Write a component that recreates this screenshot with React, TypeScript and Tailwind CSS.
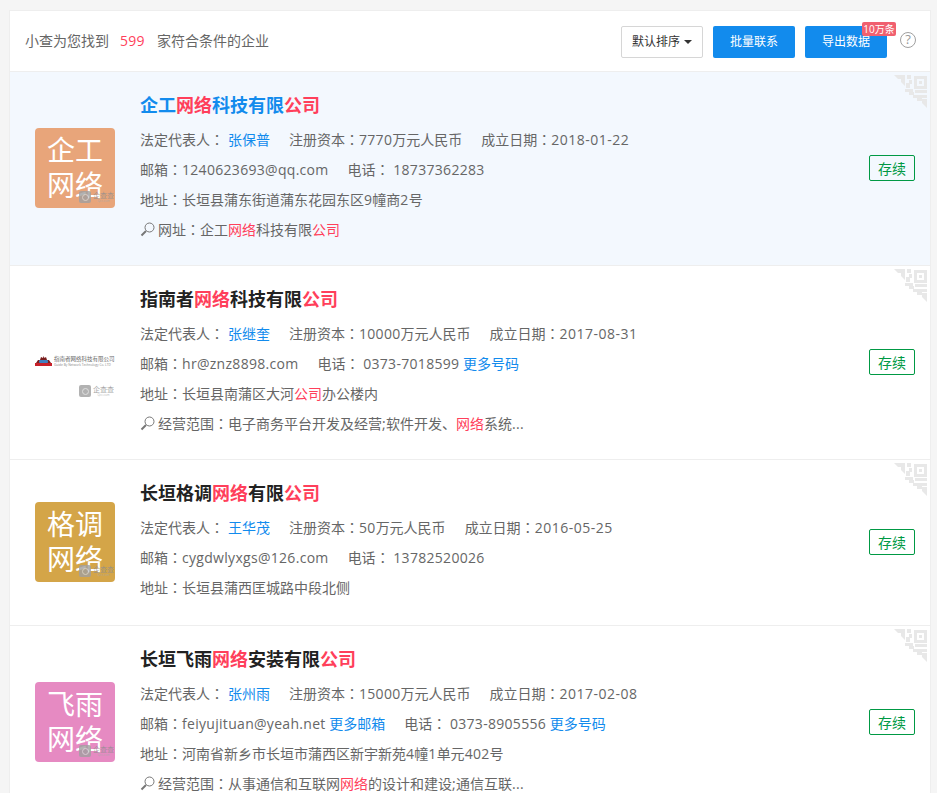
import React from "react";

type Seg = string | { hl: string } | { link: string };

// latin runs are a bit wider in the original, and its colon sits centred
function Run({ text }: { text: string }) {
  const parts = text.split(/(：|[\x21-\x7e]+)/).filter(Boolean);
  return (
    <>
      {parts.map((p, i) => {
        if (p === "：") return <span key={i} className="[font-family:'Noto_Sans_CJK_TC',sans-serif]">：</span>;
        if (/^[\x21-\x7e]+$/.test(p)) return <span key={i} className="tracking-[0.3px]">{p}</span>;
        return <span key={i}>{p}</span>;
      })}
    </>
  );
}

function Text({ segs }: { segs: Seg[] }) {
  return (
    <>
      {segs.map((s, i) => {
        if (typeof s === "string") return <Run key={i} text={s} />;
        if ("hl" in s) return <span key={i} className="text-[#ff3f5b]">{s.hl}</span>;
        return <span key={i} className="text-[#128bed]">{s.link}</span>;
      })}
    </>
  );
}

function QrCorner() {
  const cells = [
    [13, 0, 4, 4], [15, 5, 3, 4], [12, 8, 4, 5],
    [25, 6, 3, 3],
    [11, 14, 8, 3], [15, 17, 5, 3], [21, 15, 12, 3], [19, 20, 6, 3], [25, 20, 8, 3], [23, 23, 5, 3],
  ];
  return (
    <svg width="33" height="33" viewBox="0 0 33 33" className="absolute right-[3px] top-[3px]">
      <path d="M0 0H11V11L7 7V4H4Z" fill="#e8e8e8" />
      <path d="M20 1H33V14H20ZM23 4V11H30V4Z" fill="#e8e8e8" fillRule="evenodd" />
      <path d="M28 24H33V33L28 28Z" fill="#e8e8e8" />
      {cells.map((c, i) => (
        <rect key={i} x={c[0]} y={c[1]} width={c[2]} height={c[3]} fill="#e8e8e8" />
      ))}
    </svg>
  );
}

function Watermark() {
  return (
    <div className="absolute left-[44px] top-[63px] flex items-center gap-[2px] opacity-80">
      <div className="flex h-[12px] w-[12px] items-center justify-center rounded-[2px] bg-[#a0a0a0]">
        <div className="h-[7px] w-[7px] rounded-full border border-[#d8d8d8]" />
      </div>
      <div className="flex flex-col items-center leading-none">
        <span className="text-[7px] leading-[8px] text-[#8f8f8f]">企查查</span>
        <span className="text-[3px] leading-[3px] text-[#aaaaaa]">Qcc.com</span>
      </div>
    </div>
  );
}

function LetterLogo({ top, bottom, color }: { top: string; bottom: string; color: string }) {
  return (
    <div className={`relative mb-px flex h-20 w-20 shrink-0 flex-col items-center justify-center rounded-[4px] text-[28px] leading-[35px] text-white ${color}`}>
      <span>{top}</span>
      <span>{bottom}</span>
      <Watermark />
    </div>
  );
}

function ImageLogo() {
  return (
    <div className="relative mb-px h-20 w-20 shrink-0">
      <div className="absolute left-0 top-[33px] flex items-center gap-[2px]">
        <svg width="17" height="13" viewBox="0 0 17 13">
          <path d="M1 8 L3 5 L5 5 L6 2 L8 3 L8.5 1 L9.5 3 L11 2 L12 5 L14 5 L16 8 Z" fill="#7a1f1f" />
          <rect x="4" y="5" width="9" height="3" rx="1" fill="#3f7fc0" />
          <rect x="0" y="8" width="17" height="3" fill="#c8202a" />
        </svg>
        <div className="flex flex-col leading-none">
          <span className="whitespace-nowrap text-[5.5px] leading-[7px] text-[#666666]">指南者网络科技有限公司</span>
          <span className="whitespace-nowrap text-[3.2px] leading-[4px] text-[#888888]">Guide By Network Technology Co. LTD</span>
        </div>
      </div>
      <Watermark />
    </div>
  );
}

function Row({
  logo, title, rep, capital, date, mail, phone, extra, last, active, line3Pad,
}: {
  logo: React.ReactNode;
  title: Seg[];
  rep: string;
  capital: string;
  date: string;
  mail: Seg[];
  phone: Seg[];
  extra: Seg[];
  last?: Seg[];
  active?: boolean;
  line3Pad?: boolean;
}) {
  return (
    <div className={`relative flex items-center border-b border-[#eeeeee] pl-[25px] pr-[15px] ${active ? "bg-[#f3f8fe]" : "bg-white"}`}>
      <QrCorner />
      {logo}
      <div className={`ml-[25px] min-w-0 flex-1 pt-5 ${line3Pad ? "pb-[23px]" : "pb-[21px]"}`}>
        <div className={`mb-[6px] h-[26px] text-[18px] font-bold leading-[26px] ${active ? "text-[#128bed]" : "text-[#222222]"}`}>
          <Text segs={title} />
        </div>
        <div className="flex h-[30px] items-center whitespace-nowrap">
          <span><Run text="法定代表人：" /></span>
          <span className="ml-1 text-[#128bed]">{rep}</span>
          <span className="ml-[19px]"><Run text={`注册资本：${capital}`} /></span>
          <span className="ml-[19px]"><Run text="成立日期：" /><span className="tracking-[0.5px]">{date}</span></span>
        </div>
        <div className="flex h-[30px] items-center gap-[19px] whitespace-nowrap">
          <span><Text segs={mail} /></span>
          <span><Text segs={phone} /></span>
        </div>
        <div className="flex h-[30px] items-center whitespace-nowrap"><span><Text segs={extra} /></span></div>
        {last && (
          <div className="flex h-[30px] items-center whitespace-nowrap">
            <svg width="15" height="15" viewBox="0 0 15 15" fill="none" stroke="#777777" className="mr-[3px]">
              <circle cx="9.5" cy="5.5" r="4.5" strokeWidth="1" />
              <path d="M6 9 L1.5 13.5" strokeWidth="2" />
            </svg>
            <span><Text segs={last} /></span>
          </div>
        )}
      </div>
      <div className="mb-px flex h-[26px] w-[46px] shrink-0 items-center justify-center rounded-[2px] border border-[#009944] text-[#009944]">存续</div>
    </div>
  );
}

export default function App() {
  return (
    <div className="h-[793px] overflow-hidden bg-[#f5f5f5] pl-[9px] pr-[6px] pt-[10px] text-[14px] text-[#666666] [font-family:'Open_Sans','Noto_Sans_CJK_SC',sans-serif]">
      <div className="border border-[#eeeeee] bg-white">
        <div className="flex h-[61px] items-center border-b border-[#eeeeee] pl-[15px] pr-[14px] pt-px">
          <div className="-mt-[3px] flex-1 text-[14px]">
            小查为您找到<span className="ml-[11px] mr-3 tracking-[0.3px] text-[#ff3f5b]">599</span>家符合条件的企业
          </div>
          <div className="flex h-8 w-[82px] items-center justify-center gap-1 rounded-[2px] border border-[#d6d6d6] text-[12px] text-[#333333]">
            默认排序
            <span className="h-0 w-0 border-x-[4px] border-t-[4px] border-x-transparent border-t-[#333333]" />
          </div>
          <button className="ml-[10px] h-8 w-[82px] rounded-[2px] bg-[#128bed] text-[12px] text-white">批量联系</button>
          <div className="relative ml-[10px]">
            <button className="h-8 w-[82px] rounded-[2px] bg-[#128bed] text-[12px] text-white">导出数据</button>
            <span className="absolute left-[57px] top-[-4px] flex h-[14px] w-[34px] items-center justify-center rounded-[2px] bg-[#f0606f] text-[10px] leading-none text-white">10万条</span>
          </div>
          <div className="-mt-1 ml-[13px] flex h-4 w-4 items-center justify-center rounded-full border-[1.5px] border-[#a0a0a0] text-[13px] leading-none text-[#999999]">?</div>
        </div>
        <Row
          active
          logo={<LetterLogo top="企工" bottom="网络" color="bg-[#e8a57a]" />}
          title={["企工", { hl: "网络" }, "科技有限", { hl: "公司" }]}
          rep="张保普"
          capital="7770万元人民币"
          date="2018-01-22"
          mail={["邮箱：1240623693@qq.com"]}
          phone={["电话： 18737362283"]}
          extra={["地址：长垣县蒲东街道蒲东花园东区9幢商2号"]}
          last={["网址：企工", { hl: "网络" }, "科技有限", { hl: "公司" }]}
        />
        <Row
          logo={<ImageLogo />}
          title={["指南者", { hl: "网络" }, "科技有限", { hl: "公司" }]}
          rep="张继奎"
          capital="10000万元人民币"
          date="2017-08-31"
          mail={["邮箱：hr@znz8898.com"]}
          phone={["电话： 0373-7018599 ", { link: "更多号码" }]}
          extra={["地址：长垣县南蒲区大河", { hl: "公司" }, "办公楼内"]}
          last={["经营范围：电子商务平台开发及经营;软件开发、", { hl: "网络" }, "系统..."]}
        />
        <Row
          line3Pad
          logo={<LetterLogo top="格调" bottom="网络" color="bg-[#d4a548]" />}
          title={["长垣格调", { hl: "网络" }, "有限", { hl: "公司" }]}
          rep="王华茂"
          capital="50万元人民币"
          date="2016-05-25"
          mail={["邮箱：cygdwlyxgs@126.com"]}
          phone={["电话： 13782520026"]}
          extra={["地址：长垣县蒲西匡城路中段北侧"]}
        />
        <Row
          logo={<LetterLogo top="飞雨" bottom="网络" color="bg-[#e68ac2]" />}
          title={["长垣飞雨", { hl: "网络" }, "安装有限", { hl: "公司" }]}
          rep="张州雨"
          capital="15000万元人民币"
          date="2017-02-08"
          mail={["邮箱：feiyujituan@yeah.net ", { link: "更多邮箱" }]}
          phone={["电话： 0373-8905556 ", { link: "更多号码" }]}
          extra={["地址：河南省新乡市长垣市蒲西区新宇新苑4幢1单元402号"]}
          last={["经营范围：从事通信和互联网", { hl: "网络" }, "的设计和建设;通信互联..."]}
        />
      </div>
    </div>
  );
}
